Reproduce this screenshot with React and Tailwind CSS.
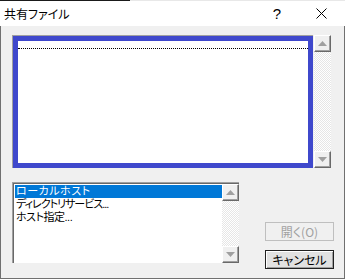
import React from "react";

const jp = "font-['Noto_Sans_CJK_JP','Noto_Sans',sans-serif] [font-feature-settings:'palt']";

function ScrollBtn({ down }) {
  return (
    <div className="w-[17px] h-[17px] shrink-0 bg-[#f0f0f0] border border-t-white border-l-white border-r-[#696969] border-b-[#696969] shadow-[inset_-1px_-1px_0_#a0a0a0] flex items-center justify-center">
      <svg width="9" height="5" viewBox="0 0 9 5">
        <path d={down ? "M0 0h9L4.5 5z" : "M0 5h9L4.5 0z"} fill="#a0a0a0" />
      </svg>
    </div>
  );
}

function ScrollBar() {
  return (
    <div className="w-[17px] flex flex-col shrink-0">
      <ScrollBtn />
      <div className="flex-1 bg-[repeating-conic-gradient(#ffffff_0_25%,#e6e6e6_0_50%)] bg-[length:2px_2px]" />
      <ScrollBtn down />
    </div>
  );
}

const items = [
  { t: "ローカルホスト", cls: "tracking-[0.5px] bg-[#0078d7] text-white" },
  { t: "ディレクトリサービス...", cls: "tracking-[-1px]" },
  { t: "ホスト指定...", cls: "tracking-[-0.5px]" },
];

export default function App() {
  return (
    <div className={`w-[345px] h-[279px] flex flex-col bg-[#f0f0f0] text-black overflow-hidden ${jp}`}>
      <div className="flex h-px shrink-0">
        <div className="w-[130px] bg-[#1a1a1a]" />
        <div className="flex-1 bg-[#e8e8e8]" />
      </div>
      <div className="h-[25px] shrink-0 bg-white flex items-center">
        <span className="pl-[4px] text-[12px] leading-none">共有ファイル</span>
        <span className="ml-auto mr-[35px] text-[15px] leading-none font-['Liberation_Sans',sans-serif]">?</span>
        <svg width="11" height="11" viewBox="0 0 11 11" className="mr-[18px]">
          <path d="M0.5 0.5L10.5 10.5M10.5 0.5L0.5 10.5" stroke="#000" strokeWidth="1" />
        </svg>
      </div>

      <div className="flex-1 flex flex-col border-l border-r border-b border-[#707070] pl-[11px]">
        <div className="mt-[9px] flex h-[133px] w-[319px]">
          <div className="flex-1 flex border-l border-t border-[#a0a0a0]">
            <div className="flex-1 border-[5px] border-[#3f48cc] bg-white pt-[7px]">
              <div className="border-t border-dotted border-black" />
            </div>
          </div>
          <div className="w-px" />
          <ScrollBar />
        </div>

        <div className="mt-[14px] flex">
          <div className="w-[227px] h-[81px] flex border-l border-t border-[#a0a0a0] shadow-[inset_1px_1px_0_#696969] bg-white pl-px pt-px">
            <div className="flex-1 flex flex-col pt-px pl-px font-['Liberation_Sans','Noto_Sans_CJK_JP',sans-serif]">
              {items.map((it) => (
                <div
                  key={it.t}
                  className={`h-[13px] text-[11px] leading-[13px] pl-px whitespace-nowrap ${it.cls}`}
                >
                  {it.t}
                </div>
              ))}
            </div>
            <ScrollBar />
          </div>

          <div className="ml-[26px] pt-[40px] flex flex-col gap-[9px]">
            <div className="w-[69px] h-[19px] border border-[#bfbfbf] bg-[#f0f0f0] text-[#a0a0a0] text-[12px] leading-none flex items-center justify-center">
              開く(O)
            </div>
            <div className="w-[69px] h-[19px] border border-[#202020] bg-[#e1e1e1] shadow-[inset_1px_1px_0_#fff,inset_-1px_-1px_0_#a0a0a0] text-[12px] leading-none flex items-center justify-center">
              キャンセル
            </div>
          </div>
        </div>
      </div>
    </div>
  );
}
